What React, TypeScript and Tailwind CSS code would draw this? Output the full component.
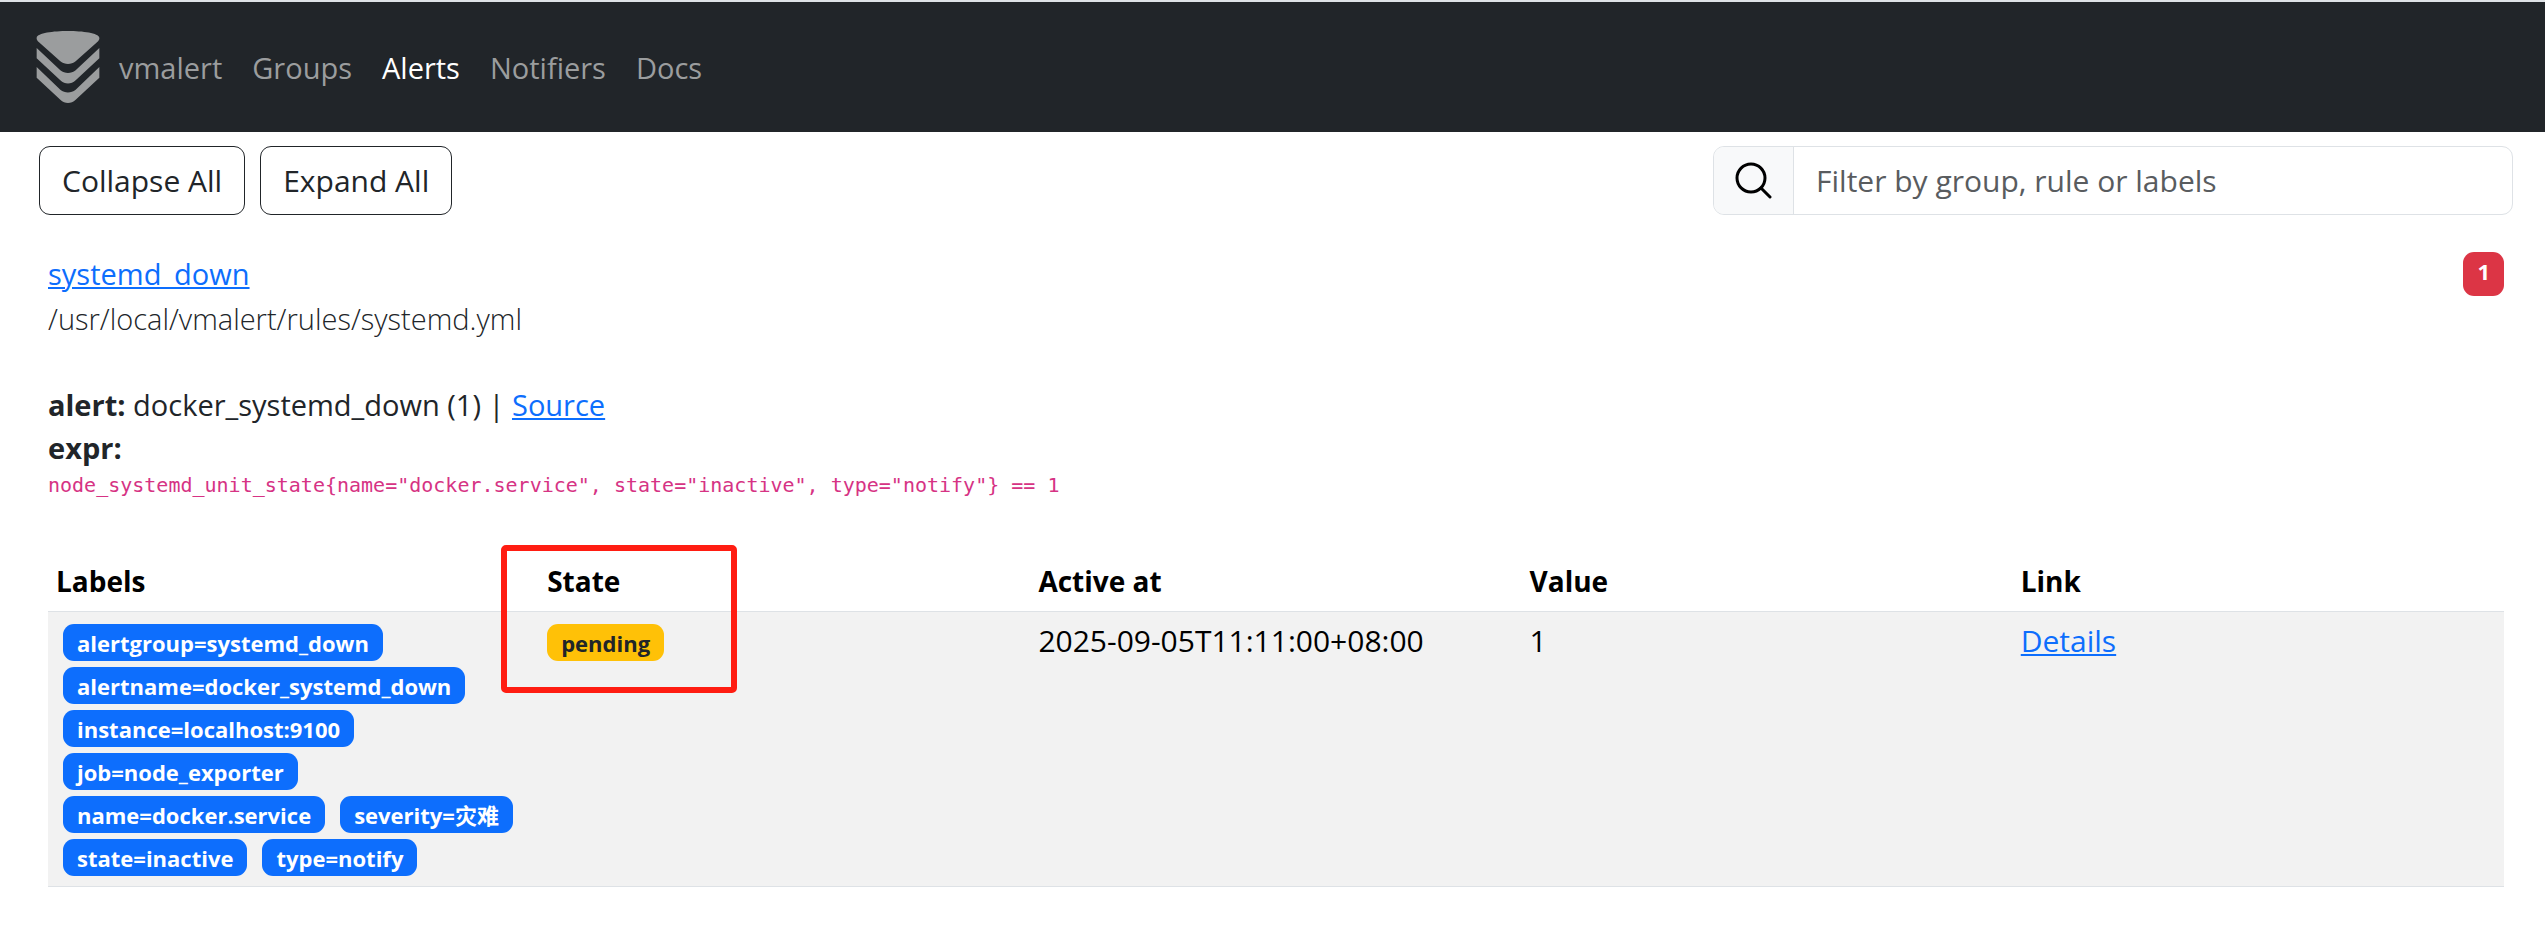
import React from "react";

const navItems = [
  { label: "Groups", active: false },
  { label: "Alerts", active: true },
  { label: "Notifiers", active: false },
  { label: "Docs", active: false },
];

const labels = [
  "alertgroup=systemd_down",
  "alertname=docker_systemd_down",
  "instance=localhost:9100",
  "job=node_exporter",
  "name=docker.service",
  "severity=灾难",
  "state=inactive",
  "type=notify",
];

const columns = ["Labels", "State", "Active at", "Value", "Link"];

const link = "text-[#0d6efd] underline decoration-2 underline-offset-2";

function Logo() {
  return (
    <svg viewBox="48 48 192 216" className="h-[72px] w-16" fill="currentColor" aria-hidden="true">
      <path d="M50 68C52 54 100 48 144 48C188 48 236 54 238 68C239 73 236 77 231 82L167 139C153 150 135 150 121 139L57 82C52 77 49 73 50 68Z" />
      <path d="M50 99L121 166C135 177 153 177 167 166L238 99V130L167 196C153 209 135 209 121 196L50 130Z" />
      <path d="M50 156L121 224C135 235 153 235 167 224L238 156V188L167 254C153 267 135 267 121 254L50 188Z" />
    </svg>
  );
}

function SearchIcon() {
  return (
    <svg viewBox="0 0 37 37" className="size-[37px]" fill="none" stroke="#000" strokeWidth="3" strokeLinecap="round" aria-hidden="true">
      <circle cx="16" cy="16" r="14" />
      <path d="M26 26L35 35" />
    </svg>
  );
}

function Navbar() {
  return (
    <header className="border-t-2 border-[#dee2e6] bg-[#212529]">
      <nav className="flex h-[130px] items-center gap-[30px] px-9 text-[29px] text-[#9b9d9e]">
        <a href="#" className="flex items-center gap-[19px]">
          <Logo />
          <span>vmalert</span>
        </a>
        {navItems.map((item) => (
          <a key={item.label} href="#" className={item.active ? "text-white" : ""}>
            {item.label}
          </a>
        ))}
      </nav>
    </header>
  );
}

function Toolbar() {
  const button = "h-[69px] rounded-[11px] border border-[#212529] px-[22px]";
  return (
    <div className="flex items-center justify-between pt-3.5 pr-8 pl-[39px]">
      <div className="flex gap-[15px]">
        <button type="button" className={button}>Collapse All</button>
        <button type="button" className={button}>Expand All</button>
      </div>
      <div className="flex h-[69px] w-[800px] overflow-hidden rounded-[11px] border border-[#dee2e6]">
        <label htmlFor="search" aria-label="Search" className="flex w-20 items-center justify-center border-r border-[#dee2e6] bg-[#f8f9fa]">
          <SearchIcon />
        </label>
        <input
          id="search"
          type="text"
          placeholder="Filter by group, rule or labels"
          className="min-w-0 flex-1 px-[22px] outline-none placeholder:text-[#595c5f]"
        />
      </div>
    </div>
  );
}

function Badge({ text, tone }: { text: string; tone: string }) {
  return (
    <span className={`flex h-[37px] items-center rounded-[11px] px-3.5 text-[22px] leading-none font-bold whitespace-nowrap ${tone}`}>
      {text}
    </span>
  );
}

export default function App() {
  return (
    <div className="min-h-screen bg-white font-['Open_Sans','Noto_Sans_CJK_SC',sans-serif] text-[30px] leading-[43px] text-[#212529]">
      <Navbar />
      <main>
        <Toolbar />
        <section className="pt-[37px] pr-[41px] pl-12">
          <div className="flex items-start justify-between">
            <div className="flex flex-col items-start gap-0.5 text-[29px]">
              <a href="#" className={link}>systemd_down</a>
              <span className="font-light">/usr/local/vmalert/rules/systemd.yml</span>
            </div>
            <span className="h-11 rounded-[11px] bg-[#dc3545] px-3.5 pt-2 text-[22px] leading-[22px] font-bold text-white">1</span>
          </div>

          <div className="pt-[43px] text-[29px]">
            <p>
              <b>alert:</b> docker_systemd_down (1) |{" "}
              <a href="#" className={link}>Source</a>
            </p>
            <p><b>expr:</b></p>
            <code className="block font-['DejaVu_Sans_Mono',monospace] text-[20px] leading-8 text-[#d63384]">
              {'node_systemd_unit_state{name="docker.service", state="inactive", type="notify"} == 1'}
            </code>
          </div>

          <div className="relative mt-[52px]">
            <table className="w-full table-fixed border-collapse text-left text-black">
              <thead>
                <tr className="border-b border-[#dee2e6]">
                  {columns.map((c) => (
                    <th key={c} className="px-2 pt-[7px] pb-2 text-[28px] font-bold">{c}</th>
                  ))}
                </tr>
              </thead>
              <tbody>
                <tr className="border-b border-[#dee2e6] bg-[#f2f2f2] align-top">
                  <td className="px-2 pt-3 pb-2.5">
                    <div className="flex flex-wrap gap-x-[15px] gap-y-1.5 pl-[7px]">
                      {labels.map((l) => (
                        <Badge key={l} text={l} tone="bg-[#0d6efd] text-white" />
                      ))}
                    </div>
                  </td>
                  <td className="px-2 pt-3">
                    <div className="flex">
                      <Badge text="pending" tone="bg-[#ffc107] text-[#212529]" />
                    </div>
                  </td>
                  <td className="px-2 py-[7px]">2025-09-05T11:11:00+08:00</td>
                  <td className="px-2 py-[7px]">1</td>
                  <td className="px-2 py-[7px]">
                    <a href="#" className={link}>Details</a>
                  </td>
                </tr>
              </tbody>
            </table>
            <div className="pointer-events-none absolute -top-2 left-[453px] h-[148px] w-[236px] rounded-[5px] border-6 border-[#ff1d12]" />
          </div>
        </section>
      </main>
    </div>
  );
}
